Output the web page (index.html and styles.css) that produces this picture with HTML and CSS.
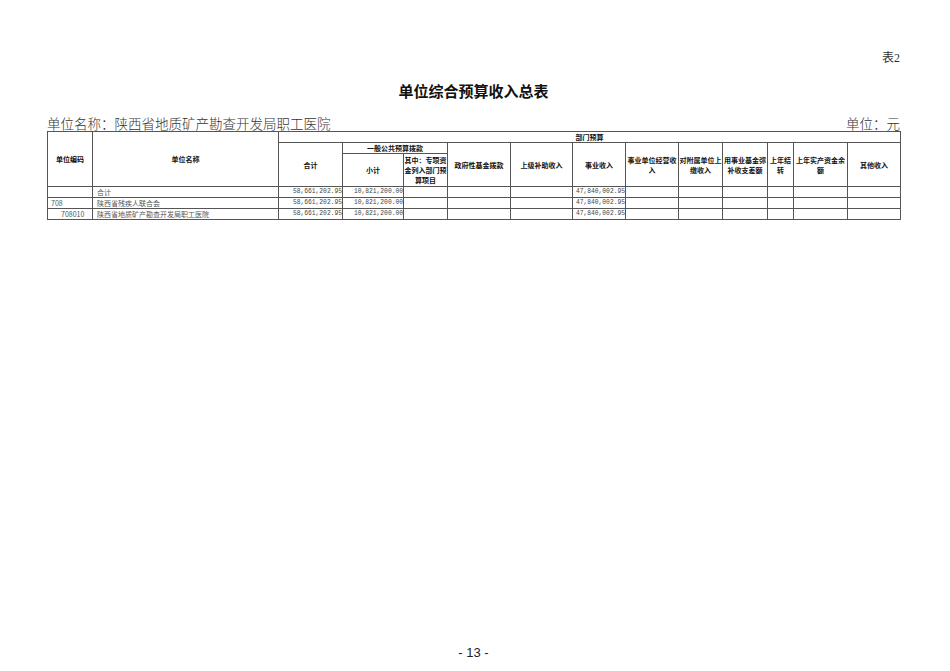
FILE: index.html
```html
<!DOCTYPE html>
<html lang="zh">
<head>
<meta charset="utf-8">
<title>单位综合预算收入总表</title>
<link rel="stylesheet" href="styles.css">
</head>
<body>
<div class="page">
  <div class="tag">表2</div>
  <h1 class="title">单位综合预算收入总表</h1>
  <div class="unit-line">
    <span>单位名称：陕西省地质矿产勘查开发局职工医院</span>
    <span>单位：元</span>
  </div>
  <table class="grid">
    <colgroup>
      <col class="c45"><col class="c186"><col class="c64"><col class="c61"><col class="c44">
      <col class="c63"><col class="c62"><col class="c53"><col class="c53"><col class="c44">
      <col class="c45"><col class="c26"><col class="c54"><col class="c53">
    </colgroup>
    <thead>
      <tr class="h1">
        <th rowspan="3">单位编码</th>
        <th rowspan="3">单位名称</th>
        <th colspan="12">部门预算</th>
      </tr>
      <tr class="h2">
        <th rowspan="2">合计</th>
        <th colspan="2">一般公共预算拨款</th>
        <th rowspan="2">政府性基金拨款</th>
        <th rowspan="2">上级补助收入</th>
        <th rowspan="2">事业收入</th>
        <th rowspan="2">事业单位经营收入</th>
        <th rowspan="2">对附属单位上缴收入</th>
        <th rowspan="2">用事业基金弥补收支差额</th>
        <th rowspan="2">上年结转</th>
        <th rowspan="2">上年实产资金余额</th>
        <th rowspan="2">其他收入</th>
      </tr>
      <tr class="h3">
        <th>小计</th>
        <th>其中：专项资金列入部门预算项目</th>
      </tr>
    </thead>
    <tbody>
      <tr>
        <td></td><td class="name">合计</td>
        <td class="num">58,661,202.95</td><td class="num">10,821,200.00</td><td></td><td></td><td></td>
        <td class="num">47,840,002.95</td><td></td><td></td><td></td><td></td><td></td><td></td>
      </tr>
      <tr>
        <td class="code">708</td><td class="name">陕西省残疾人联合会</td>
        <td class="num">58,661,202.95</td><td class="num">10,821,200.00</td><td></td><td></td><td></td>
        <td class="num">47,840,002.95</td><td></td><td></td><td></td><td></td><td></td><td></td>
      </tr>
      <tr>
        <td class="code sub">708010</td><td class="name">陕西省地质矿产勘查开发局职工医院</td>
        <td class="num">58,661,202.95</td><td class="num">10,821,200.00</td><td></td><td></td><td></td>
        <td class="num">47,840,002.95</td><td></td><td></td><td></td><td></td><td></td><td></td>
      </tr>
    </tbody>
  </table>
  <div class="footer">- 13 -</div>
</div>
</body>
</html>
```
FILE: styles.css
```css
html, body {
  margin: 0;
  padding: 0;
  background: #fff;
}
.page {
  width: 950px;
  height: 671px;
  box-sizing: border-box;
  padding: 51px 50px 0 47px;
  display: flex;
  flex-direction: column;
  font-family: "Liberation Serif", "Noto Sans CJK SC", serif;
  color: #222;
}
.tag {
  text-align: right;
  font-size: 12px;
  line-height: 14px;
  color: #333;
}
.title {
  margin: 17px 0 0;
  text-align: center;
  font-family: "Noto Sans CJK SC", sans-serif;
  font-size: 15px;
  font-weight: 700;
  line-height: 18px;
  color: #111;
}
.unit-line {
  margin-top: 15px;
  display: flex;
  justify-content: space-between;
  font-family: "Noto Sans CJK SC", serif;
  font-size: 13.5px;
  line-height: 16px;
  font-weight: 300;
  color: #333;
}
.grid {
  margin-top: 0;
  width: 853px;
  table-layout: fixed;
  border-collapse: collapse;
  font-size: 7px;
}
.c45 { width: 45px; }
.c186 { width: 186px; }
.c64 { width: 64px; }
.c61 { width: 61px; }
.c44 { width: 44px; }
.c63 { width: 63px; }
.c62 { width: 62px; }
.c53 { width: 53px; }
.c54 { width: 54px; }
.c26 { width: 26px; }
.grid th, .grid td {
  border: 1px solid #555;
  padding: 0 1px;
  overflow: hidden;
}
.grid th {
  font-family: "Noto Sans CJK SC", sans-serif;
  font-weight: 700;
  line-height: 10px;
  color: #111;
  text-align: center;
  vertical-align: middle;
  padding: 0;
}
.h1 th, .h2 th { height: 10px; }
.h3 th { height: 32px; }
.grid td {
  height: 10px;
  line-height: 10px;
  font-family: "Noto Sans CJK SC", serif;
  color: #555;
  white-space: nowrap;
}
.grid td.num {
  font-family: "Liberation Mono", monospace;
  font-size: 6.3px;
  color: #444;
  text-align: right;
  padding-right: 0;
}
.grid td.name { padding-left: 4px; }
.grid td.code { padding-left: 3px; }
.grid td.code.sub { padding-left: 13px; }
.footer {
  margin-top: auto;
  margin-bottom: 11px;
  text-align: center;
  font-family: "Liberation Sans", Arial, sans-serif;
  font-size: 13px;
  color: #222;
}
```
